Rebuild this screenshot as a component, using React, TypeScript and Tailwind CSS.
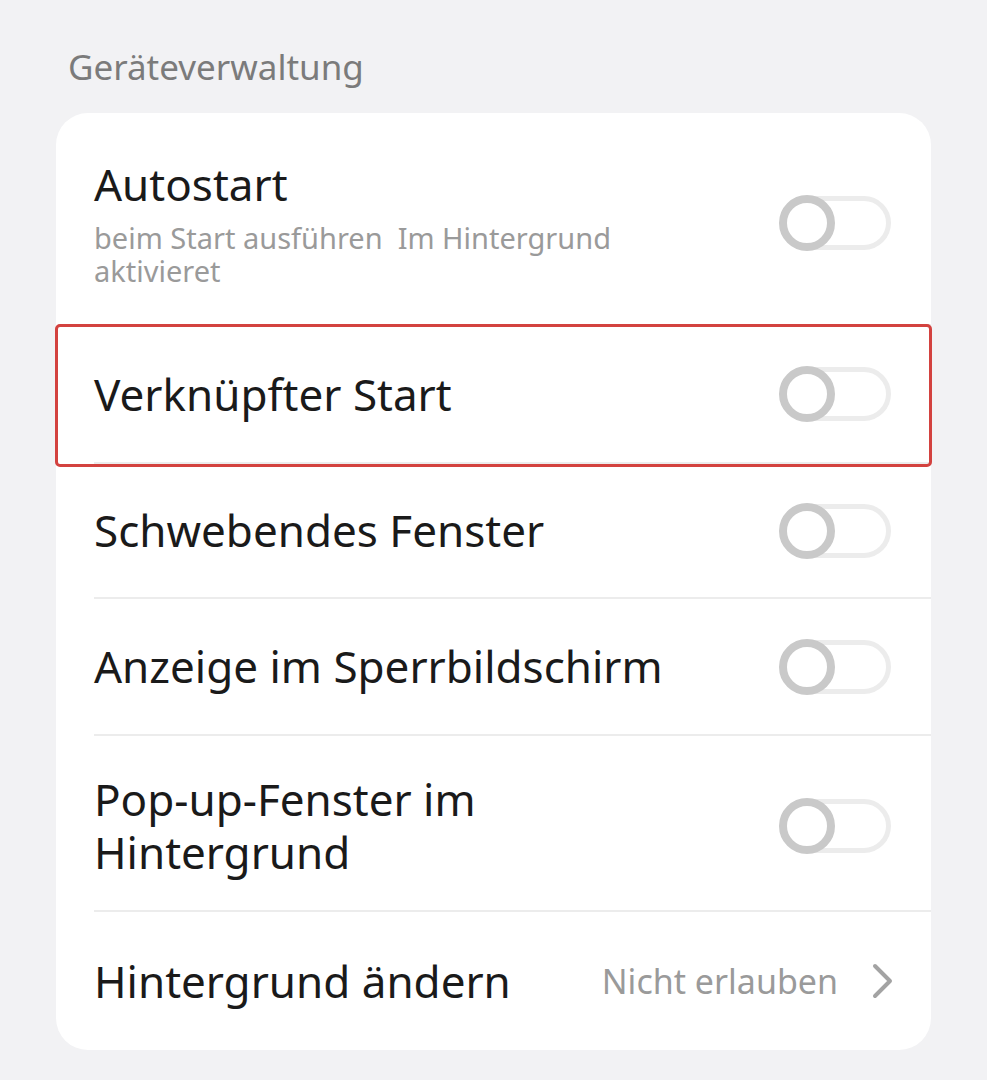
import React from 'react'

const font = { fontFamily: '"Noto Sans", "Open Sans", sans-serif' }

function Toggle() {
  return (
    <div className="relative w-[112px] h-[56px] shrink-0">
      <div className="absolute left-[10px] right-0 top-[1px] bottom-[1px] rounded-full border-[5px] border-[#ececec]" />
      <div className="absolute left-0 top-0 w-[56px] h-[56px] rounded-full border-[8px] border-[#c9c9c9] bg-white" />
    </div>
  )
}

function Row({
  title,
  sub,
  height,
  last,
  children,
}: {
  title: React.ReactNode
  sub?: string
  height: string
  last?: boolean
  children?: React.ReactNode
}) {
  return (
    <div className="pl-[38px]">
      <div
        className={`flex items-center justify-between pr-[40px] ${height} ${
          last ? '' : 'border-b-2 border-[#ececec]'
        }`}
      >
        <div className="flex flex-col">
          <div className="text-[44px] leading-[53px] text-[#1a1a1a]">{title}</div>
          {sub && (
            <div className="text-[29px] leading-[33px] text-[#9a9a9a] w-[560px] mt-[10px] whitespace-pre-wrap">
              {sub}
            </div>
          )}
        </div>
        {children ?? <Toggle />}
      </div>
    </div>
  )
}

export default function App() {
  return (
    <div className="min-h-[1080px] bg-[#f2f2f4] px-[56px] pt-[42px]" style={font}>
      <div className="pl-[12px] text-[35px] leading-[50px] text-[#7b7b7b]">Geräteverwaltung</div>
      <div className="mt-[21px] w-[875px] bg-white rounded-[32px]">
        <Row
          title="Autostart"
          sub={'beim Start ausführen  Im Hintergrund aktivieret'}
          height="h-[213px] pt-[8px]"
        />
        <div className="relative">
          <Row title="Verknüpfter Start" height="h-[138px]" />
          <div className="absolute left-[-1px] right-[-1px] top-[-2px] bottom-[-3px] rounded-[5px] border-[3px] border-[#d3423f]" />
        </div>
        <Row title="Schwebendes Fenster" height="h-[135px]" />
        <Row title="Anzeige im Sperrbildschirm" height="h-[137px]" />
        <Row
          title={
            <>
              Pop-up-Fenster im
              <br />
              Hintergrund
            </>
          }
          height="h-[176px] pt-[6px]"
        />
        <Row title="Hintergrund ändern" height="h-[138px]" last>
          <div className="flex items-center gap-[33px] mr-[-4px]">
            <span className="text-[34px] text-[#9a9a9a]">Nicht erlauben</span>
            <svg width="24" height="36" viewBox="0 0 24 36" fill="none">
              <path d="M4 3 L19 18 L4 33" stroke="#a3a3a3" strokeWidth="4" strokeLinecap="round" strokeLinejoin="round" />
            </svg>
          </div>
        </Row>
      </div>
    </div>
  )
}
